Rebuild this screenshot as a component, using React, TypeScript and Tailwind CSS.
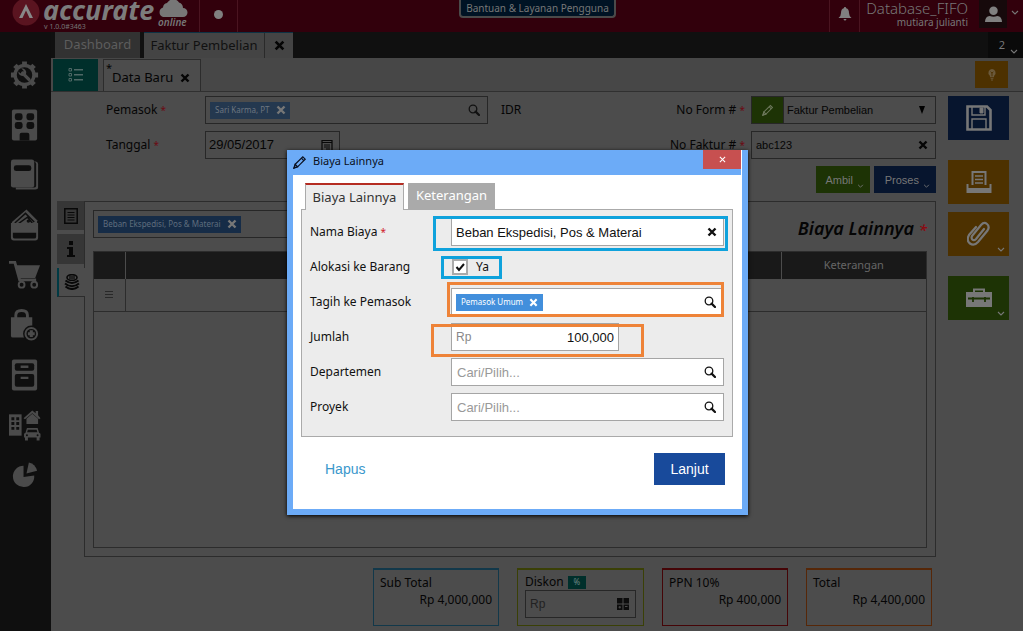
import React, { useState } from "react";

function Cross({ className = "" }: { className?: string }) {
  return (
    <svg viewBox="0 0 10 10" className={className} aria-hidden="true">
      <path d="M1.5 1.5 8.5 8.5M8.5 1.5 1.5 8.5" stroke="currentColor" strokeWidth="2.4" fill="none" />
    </svg>
  );
}

function Search({ className = "" }: { className?: string }) {
  return (
    <svg viewBox="0 0 12 12" className={className} aria-hidden="true">
      <circle cx="5" cy="5" r="3.8" stroke="currentColor" strokeWidth="1.3" fill="none" />
      <path d="M7.6 7.6 11 11" stroke="currentColor" strokeWidth="2.2" strokeLinecap="round" />
    </svg>
  );
}

function Chevron({ className = "" }: { className?: string }) {
  return (
    <svg viewBox="0 0 8 5" className={className} aria-hidden="true">
      <path d="M1 1 4 4 7 1" stroke="currentColor" strokeWidth="1.1" fill="none" />
    </svg>
  );
}

function Pencil({ className = "" }: { className?: string }) {
  return (
    <svg viewBox="0 0 14 14" className={className} fill="none" stroke="currentColor" aria-hidden="true">
      <path d="M2.2 9.2 9.8 1.8 12.2 4.2 4.6 11.8 1 13Z" strokeWidth="1.2" />
      <path d="M8.4 3.2 10.8 5.6M1 13 2.2 9.4 4.6 11.8Z" strokeWidth="1.2" />
    </svg>
  );
}

const menu: { name: string; icon: React.ReactNode }[] = [
  {
    name: "Pengaturan",
    icon: (
      <>
        <circle cx="16" cy="16" r="11.5" />
        <path
          d="M16 2v28M2 16h28M6.1 6.1l19.8 19.8M25.9 6.1 6.1 25.9"
          stroke="#4b4b4b"
          strokeWidth="5"
          fill="none"
        />
        <circle cx="16" cy="16" r="8" fill="#0f0f0f" />
        <path d="M14 14 20.5 20.5" stroke="#4b4b4b" strokeWidth="3.4" strokeLinecap="round" />
        <path d="M9.5 12.5a4.5 4.5 0 0 0 6.5 4l1.5-1.5a4.5 4.5 0 0 0-5-6l2.5 2.6-.6 2.2-2.2.6Z" />
      </>
    ),
  },
  {
    name: "Perusahaan",
    icon: (
      <>
        <rect x="3" y="0" width="26" height="32" rx="2" />
        <g fill="#0f0f0f">
          <rect x="6" y="4" width="8" height="7" rx="2.5" />
          <rect x="18" y="4" width="8" height="7" rx="2.5" />
          <rect x="6" y="13" width="8" height="7" rx="2.5" />
          <rect x="18" y="13" width="8" height="7" rx="2.5" />
          <path d="M11 32v-6q0-2 2-2h6q2 0 2 2v6Z" />
        </g>
      </>
    ),
  },
  {
    name: "Buku Besar",
    icon: (
      <>
        <path d="M7 2h20q3 0 3 3v24q0 2-3 2H7Z" />
        <path d="M6 2h19q3 0 3 3v22q0 2-3 2H5Z" fill="#0f0f0f" />
        <rect x="2" y="0" width="24" height="29" rx="2.5" />
        <rect x="5" y="6" width="18" height="6" rx="2.5" fill="#0f0f0f" />
      </>
    ),
  },
  {
    name: "Kas & Bank",
    icon: (
      <>
        <path d="M3 13 18 0l11 11v4H3Z" />
        <path d="M6 14 17 4l9 9M9 15l10-7 5 6" stroke="#0f0f0f" strokeWidth="1.5" fill="none" />
        <circle cx="20" cy="12" r="1.8" fill="#0f0f0f" />
        <path d="M2 14h28v15q0 3-3 3H5q-3 0-3-3Z" />
        <path d="M4 24h24v4q0 2-2 2H6q-2 0-2-2Z" fill="#0f0f0f" />
      </>
    ),
  },
  {
    name: "Penjualan",
    icon: (
      <>
        <path d="M0 3h6l5 18h17" stroke="#4b4b4b" strokeWidth="3" fill="none" />
        <path d="M7 6h25l-5 13H11Z" />
        <circle cx="13" cy="26" r="3" stroke="#4b4b4b" strokeWidth="2" fill="none" />
        <circle cx="26" cy="26" r="3" stroke="#4b4b4b" strokeWidth="2" fill="none" />
      </>
    ),
  },
  {
    name: "Pembelian",
    icon: (
      <>
        <path d="M2 8h22v21H4q-2 0-2-2Z" />
        <path d="M7 10V6q0-5 6-5t6 5v4" stroke="#4b4b4b" strokeWidth="3" fill="none" />
        <circle cx="23" cy="25" r="8.5" fill="#0f0f0f" />
        <circle cx="23" cy="25" r="6" stroke="#4b4b4b" strokeWidth="2" fill="none" />
        <path d="M23 21.5v7M19.5 25h7" stroke="#4b4b4b" strokeWidth="3.2" />
      </>
    ),
  },
  {
    name: "Persediaan",
    icon: (
      <>
        <rect x="3" y="0" width="26" height="32" rx="2" />
        <rect x="6" y="4" width="20" height="7.5" rx="2" fill="#0f0f0f" />
        <rect x="6" y="15" width="20" height="13" rx="2" fill="#0f0f0f" />
        <path d="M12 7.5h8M12 19h8" stroke="#4b4b4b" strokeWidth="2.5" />
      </>
    ),
  },
  {
    name: "Aset Tetap",
    icon: (
      <>
        <rect x="0" y="5" width="13" height="22" />
        <g fill="#0f0f0f">
          <path d="M2.5 8h3v3h-3zM7.500 8h3v3h-3zM2.500 13h3v3h-3zM7.500 13h3v3h-3zM2.500 18h3v3h-3zM7.500 18h3v3h-3z" />
        </g>
        <path d="m15 9 9-8 3.500 3V1.500H30V6l2.500 3-1.500 1-7-6-7.500 6Z" />
        <path d="M18 9.500 24 4.500l6 5V15H18Z" />
        <path d="M18.500 19h11l1.500 5 1.500 1v4h-1v3h-3v-3h-9v3h-3v-3h-1v-4l1.500-1Z" />
        <path d="M19.500 21h9l.8 2.600H18.700Z" fill="#0f0f0f" />
        <circle cx="18.500" cy="26.500" r="1" fill="#0f0f0f" />
        <circle cx="29.500" cy="26.500" r="1" fill="#0f0f0f" />
      </>
    ),
  },
  {
    name: "Laporan",
    icon: (
      <>
        <path d="M15 6.500v11.500l11-1.500A11 11 0 1 1 15 6.500Z" />
        <path d="M18 14.500 20.500 3q6.500 1.500 8.500 8.500Z" />
      </>
    ),
  },
];

const label = "text-[12px]";
const inputBox = "flex items-center border border-[#272727] bg-[#4c4c4c]";

function Required({ className = "text-[10px] text-[#6b0a12]" }: { className?: string }) {
  return <span className={className}>*</span>;
}

function DarkChip({ text, light }: { text: string; light?: boolean }) {
  return (
    <span
      className={
        "flex h-[17px] items-center gap-[6px] pl-[5px] pr-1 text-[8px] " +
        (light ? "bg-[#24384f] text-[#6d7680]" : "bg-[#162c47] text-[#5f6d7d]")
      }
    >
      {text}
      <button aria-label={"Hapus " + text}>
        <Cross className="size-[10px] text-[#777]" />
      </button>
    </span>
  );
}

function Total({ name, value, tone }: { name: string; value: string; tone: string }) {
  return (
    <div className={"h-[58px] w-[126px] border border-t-2 px-[6px] pt-1 text-[12px] " + tone}>
      <div className="leading-[18px]">{name}</div>
      <div className="text-right leading-4">{value}</div>
    </div>
  );
}

function Dialog() {
  const [checked, setChecked] = useState(true);
  const field = "flex h-7 items-center border border-[#a5a5a5] bg-white";
  const mark = "pointer-events-none absolute border-[3px]";
  return (
    <div
      role="dialog"
      aria-label="Biaya Lainnya"
      className="absolute left-[287px] top-[150px] w-[461px] border-x-6 border-b-6 border-[#6cabf7] bg-white shadow-[0_1px_4px_#000]"
    >
      <div className="flex h-[25px] items-start bg-[#6cabf7] text-[#0a1020]">
        <Pencil className="mt-[5px] size-[14px]" />
        <h2 className="ml-[6px] mt-[3px] flex-1 text-[11px] leading-4">Biaya Lainnya</h2>
        <button aria-label="Tutup" className="flex h-[19px] w-[38px] items-center justify-center bg-[#c75050]">
          <svg viewBox="0 0 8 8" className="size-[7px]" aria-hidden="true">
            <path d="M1 1 7 7M7 1 1 7" stroke="#fff" strokeWidth="1.2" />
          </svg>
        </button>
        <div className="h-full w-px bg-white" />
      </div>
      <div className="pb-6 pl-2 pr-[9px] pt-2">
        <div role="tablist" className="relative z-10 -mb-px flex gap-1 pl-1 text-[13px]">
          <button
            role="tab"
            aria-selected="true"
            className="h-[27px] w-[99px] border-x border-t-2 border-x-[#aaa] border-t-[#b52c22] bg-[#ececec] text-[#333]"
          >
            Biaya Lainnya
          </button>
          <button role="tab" aria-selected="false" className="h-[26px] w-[87px] bg-[#aaa] text-white">
            Keterangan
          </button>
        </div>
        <div className="grid grid-cols-[141px_1fr] items-center gap-y-[7px] border border-[#aaa] bg-[#ececec] pb-[15px] pl-2 pr-2 pt-2 text-[12px] text-[#111]">
          <label htmlFor="nama">
            Nama Biaya <Required className="text-[10px] text-[#d0202a]" />
          </label>
          <div className={"relative " + field}>
            <input
              id="nama"
              defaultValue="Beban Ekspedisi, Pos & Materai"
              className="h-full min-w-0 flex-1 pl-1 font-[Liberation_Sans] text-[13px] outline-none"
            />
            <button aria-label="Kosongkan" className="mr-[6px]">
              <Cross className="size-[10px]" />
            </button>
            <div className={mark + " -left-[19px] -right-[5px] -top-[3px] h-[35px] border-[#0fa2dc]"} />
          </div>

          <label htmlFor="alokasi">Alokasi ke Barang</label>
          <div className="relative flex h-7 items-center gap-2">
            <span className="relative ml-px flex size-4">
              <input
                id="alokasi"
                type="checkbox"
                checked={checked}
                onChange={(e) => setChecked(e.target.checked)}
                className="size-4 appearance-none border-2 border-[#aaa] bg-white"
              />
              {checked && (
                <svg viewBox="0 0 16 16" className="pointer-events-none absolute inset-0 size-4" aria-hidden="true">
                  <path d="M4.500 8 7 11 12 5" stroke="#111" strokeWidth="2" fill="none" />
                </svg>
              )}
            </span>
            <span>Ya</span>
            <div className={mark + " -left-[10px] top-[3px] h-[23px] w-[61px] border-[#0fa2dc]"} />
          </div>

          <label htmlFor="tagih">Tagih ke Pemasok</label>
          <div className={"relative " + field}>
            <span className="ml-1 flex h-[17px] items-center gap-[6px] bg-[#428fdc] pl-[5px] pr-[5px] text-[8px] text-white">
              Pemasok Umum
              <button aria-label="Hapus Pemasok Umum">
                <Cross className="size-[9px]" />
              </button>
            </span>
            <input id="tagih" className="h-full min-w-0 flex-1 outline-none" />
            <button aria-label="Cari pemasok" className="mr-[7px]">
              <Search className="size-3" />
            </button>
            <div className={mark + " -left-[5px] -right-px -top-[7px] h-[35px] border-[#ee8338]"} />
          </div>

          <label htmlFor="jumlah">Jumlah</label>
          <div className={"relative w-[168px] font-[Liberation_Sans] " + field}>
            <span className="pl-1 text-[12px] text-[#888]">Rp</span>
            <input
              id="jumlah"
              defaultValue="100,000"
              className="h-full min-w-0 flex-1 pr-1 text-right text-[13px] outline-none"
            />
            <div className={mark + " -left-[21px] -right-[26px] top-0 h-[33px] border-[#ee8338]"} />
          </div>

          <label htmlFor="dept">Departemen</label>
          <div className={field}>
            <input
              id="dept"
              placeholder="Cari/Pilih..."
              className="h-full min-w-0 flex-1 pl-[5px] font-[Liberation_Sans] text-[13px] outline-none placeholder:text-[#999]"
            />
            <button aria-label="Cari departemen" className="mr-[7px]">
              <Search className="size-3" />
            </button>
          </div>

          <label htmlFor="proyek">Proyek</label>
          <div className={field}>
            <input
              id="proyek"
              placeholder="Cari/Pilih..."
              className="h-full min-w-0 flex-1 pl-[5px] font-[Liberation_Sans] text-[13px] outline-none placeholder:text-[#999]"
            />
            <button aria-label="Cari proyek" className="mr-[7px]">
              <Search className="size-3" />
            </button>
          </div>
        </div>
        <div className="mt-4 flex items-center justify-between pl-6 pr-2 font-[Liberation_Sans] text-[14px]">
          <button className="text-[#3a98cc]">Hapus</button>
          <button className="h-8 w-[71px] bg-[#184a9b] text-white">Lanjut</button>
        </div>
      </div>
    </div>
  );
}

export default function App() {
  return (
    <div className="relative flex min-h-screen flex-col bg-white pr-0.5 font-['Noto_Sans',sans-serif] text-[#050505]">
      <header className="flex h-8 items-stretch bg-[#32000c] text-[#777]">
        <div className="relative w-[200px] border-r border-[#4a1420]">
          <svg viewBox="0 2 28 26" className="absolute left-3 top-0 h-[26px] w-7" aria-hidden="true">
            <circle cx="14" cy="14" r="13.500" fill="#5a1420" />
            <path d="M14 6 21 20h-3.500L14 12.500 10.500 20H7Z" fill="#888" />
          </svg>
          <span className="absolute left-[43px] top-0 text-[27px] font-bold italic leading-5 text-[#7c7c7c]">
            accurate
          </span>
          <svg viewBox="0 1 30 17" className="absolute left-[158px] top-0 h-[17px] w-[30px]" aria-hidden="true">
            <path d="M5 18a5 5 0 0 1 0-9.500A5 5 0 0 1 9 4 7 7 0 0 1 21 3.500 6 6 0 0 1 25 9a4.500 4.500 0 0 1 0 9Z" fill="#777" />
          </svg>
          <span className="absolute left-[158px] top-[16px] text-[10px] font-semibold italic leading-[13px]">online</span>
          <span className="absolute left-[44px] top-[22px] text-[7px] leading-[9px]">v 1.0.0#3463</span>
        </div>
        <div className="flex w-[38px] items-center justify-center border-r border-[#4a1420]">
          <span className="-mt-1 size-[9px] rounded-full bg-[#808080]" />
        </div>
        <div className="flex flex-1 justify-center pl-2">
          <button className="h-[18px] w-[157px] rounded-b border-2 border-t-0 border-[#4a4a4a] bg-[#001324] text-[10px] leading-[14px] text-[#777]">
            Bantuan &amp; Layanan Pengguna
          </button>
        </div>
        <div className="flex w-[31px] items-center justify-center border-x border-[#4a1420]">
          <svg viewBox="0 0 14 14" className="-mt-1 size-[14px]" fill="#808080" aria-label="Notifikasi">
            <path d="M7 0q1.200 0 1.200 1.200Q11 2 11 6q0 3 2.500 5H.5Q3 9 3 6q0-4 2.800-4.800Q5.800 0 7 0Z" />
            <path d="M5.500 12h3q-.3 1.500-1.500 1.500T5.500 12Z" />
          </svg>
        </div>
        <div className="w-[108px] text-right">
          <div className="text-[15px] font-light leading-[17px]">Database_FIFO</div>
          <div className="text-[10px] leading-[11px]">mutiara julianti</div>
        </div>
        <div className="ml-[11px] flex h-7 w-7 items-center justify-center bg-[#16090b]">
          <svg viewBox="0 0 18 18" className="size-[17px]" fill="#808080" aria-label="Pengguna">
            <circle cx="9" cy="5" r="4.500" />
            <path d="M0 17q0-6 5-6.500 4 1.500 8 0 5 .5 5 6.500Z" />
          </svg>
        </div>
        <div className="flex w-4 justify-center pt-[10px]">
          <Chevron className="h-[5px] w-2" />
        </div>
      </header>

      <div className="flex flex-1">
        <nav className="w-[51px] bg-[#0f0f0f] pt-[18px]" aria-label="Menu utama">
          {menu.map((m) => (
            <a key={m.name} href="#" aria-label={m.name} className="flex h-[50px] items-center justify-center pr-0.5">
              <svg viewBox="0 0 33 32" className="size-8" fill="#4b4b4b" aria-hidden="true">
                {m.icon}
              </svg>
            </a>
          ))}
        </nav>

        <div className="flex min-w-0 flex-1 flex-col bg-[#4c4c4c]">
          <div className="flex h-[26px] items-stretch bg-[#101010] pl-1 text-[13px]">
            <button className="w-[85px] bg-[#323232] text-[#5d5d5d]">Dashboard</button>
            <div className="ml-1 flex w-[149px] border-t border-[#0d3244] bg-[#444]">
              <button className="w-[121px] border-r border-[#2a2a2a] text-[#111]">Faktur Pembelian</button>
              <button aria-label="Tutup tab" className="flex flex-1 items-center justify-center">
                <Cross className="size-[11px]" />
              </button>
            </div>
            <button className="ml-auto flex w-[35px] items-center justify-end gap-[5px] bg-[#0a0a0a] pr-[5px] text-[11px] text-[#777]">
              2
              <Chevron className="mt-3 h-[5px] w-2" />
            </button>
          </div>

          <div className="flex h-[34px] items-end border-b border-[#303030] bg-[#474747] pl-[2px]">
            <button aria-label="Daftar" className="flex h-8 w-[45px] items-center justify-center bg-[#002f2b]">
              <svg viewBox="0 0 16 14" className="h-[14px] w-4" stroke="#4f6866" fill="none" aria-hidden="true">
                <path d="M1 .5h2.500V3H1zM1 5.500h2.500V8H1zM1 10.500h2.500V13H1z" />
                <path d="M6 1.800h9M6 6.800h9M6 11.800h9" strokeWidth="1.500" />
              </svg>
            </button>
            <div className="relative ml-[5px] flex h-8 w-[98px] items-center border border-b-0 border-[#2c2c2c] bg-[#4c4c4c] pl-2 pt-1">
              <span className="absolute left-[2px] top-0 text-[11px] leading-4">*</span>
              <span className="text-[13px]">Data Baru</span>
              <button aria-label="Tutup Data Baru" className="ml-[7px]">
                <Cross className="size-[10px]" />
              </button>
            </div>
            <button
              aria-label="Petunjuk"
              className="mb-[3px] ml-auto mr-[15px] flex h-[27px] w-[33px] items-center justify-center bg-[#4d3100]"
            >
              <svg viewBox="0 0 10 14" className="h-[13px] w-[10px]" aria-hidden="true">
                <path d="M5 1a4 4 0 0 1 2.500 7L7 10H3L2.500 8A4 4 0 0 1 5 1Z" fill="#6b5a3c" />
                <path d="M5 9V5M3.500 4 5 5.500 6.500 4" stroke="#4d3100" fill="none" />
                <path d="M3.500 11.500h3M4 13h2" stroke="#6b5a3c" />
              </svg>
            </button>
          </div>

          <div className="flex flex-1 pl-[6px] pr-[14px] pt-1">
            <main className="flex min-w-0 flex-1 flex-col">
              <div className="flex justify-between pl-[49px]">
                <div className="grid grid-cols-[99px_auto_auto] content-start items-center gap-y-[7px]">
                  <label htmlFor="pemasok" className={label}>
                    Pemasok <Required />
                  </label>
                  <div className={inputBox + " h-7 w-[283px] pl-1"}>
                    <DarkChip text="Sari Karma, PT" light />
                    <input id="pemasok" className="min-w-0 flex-1 outline-none" />
                    <Search className="mr-[7px] size-3 text-[#111]" />
                  </div>
                  <span className="pl-[13px] text-[12px]">IDR</span>
                  <label htmlFor="tanggal" className={label}>
                    Tanggal <Required />
                  </label>
                  <div className={inputBox + " h-7 w-[135px] pl-[3px]"}>
                    <input
                      id="tanggal"
                      defaultValue="29/05/2017"
                      className="min-w-0 flex-1 font-[Liberation_Sans] text-[13px] outline-none"
                    />
                    <svg viewBox="0 0 12 12" className="mr-[6px] size-3" aria-hidden="true">
                      <path d="M1 1.500h10v10H1zM1 3.500h10M3 6h6M3 8h6M5 10h4" stroke="#080808" strokeWidth="1.200" fill="none" />
                    </svg>
                  </div>
                </div>
                <div className="grid grid-cols-[auto_185px] items-center gap-x-[6px] gap-y-[7px]">
                  <label htmlFor="form" className={label + " text-right"}>
                    No Form # <Required />
                  </label>
                  <div className={inputBox + " relative h-7"}>
                    <button aria-label="Ubah nomor" className="flex h-full w-[31px] items-center justify-center bg-[#1d3305]">
                      <Pencil className="size-3 text-[#6d785c]" />
                    </button>
                    <select
                      id="form"
                      className="h-full min-w-0 flex-1 appearance-none border-l border-[#272727] pl-[3px] font-[Liberation_Sans] text-[11px] outline-none"
                    >
                      <option>Faktur Pembelian</option>
                    </select>
                    <svg viewBox="0 0 8 8" className="pointer-events-none absolute right-[9px] size-2" aria-hidden="true">
                      <path d="M1 0h6L4 8Z" />
                    </svg>
                  </div>
                  <label htmlFor="faktur" className={label + " text-right"}>
                    No Faktur # <Required />
                  </label>
                  <div className={inputBox + " h-7 pl-1"}>
                    <input
                      id="faktur"
                      defaultValue="abc123"
                      className="min-w-0 flex-1 font-[Liberation_Sans] text-[11px] outline-none"
                    />
                    <button aria-label="Kosongkan nomor" className="mr-[7px]">
                      <Cross className="size-[10px]" />
                    </button>
                  </div>
                  <div className="col-span-2 flex justify-end gap-1 font-[Liberation_Sans] text-[11px] text-[#777]">
                    <button className="flex h-[27px] w-[54px] items-center justify-end gap-1 bg-[#1d3305] pr-[6px] pt-0.5">
                      Ambil <Chevron className="mt-[10px] h-[4px] w-[7px]" />
                    </button>
                    <button className="flex h-[27px] w-[62px] items-center justify-end gap-1 bg-[#07152e] pr-[6px] pt-0.5">
                      Proses <Chevron className="mt-[10px] h-[4px] w-[7px]" />
                    </button>
                  </div>
                </div>
              </div>

              <div className="mt-2 flex flex-1">
                <div role="tablist" aria-orientation="vertical" className="z-10 -mr-px flex w-7 flex-col gap-1">
                  <button role="tab" aria-label="Rincian" className="flex h-[29px] w-[27px] items-center justify-center bg-[#363636]">
                    <svg viewBox="0 0 14 16" className="h-4 w-[14px]" stroke="#080808" fill="none" aria-hidden="true">
                      <path d="M.8.8h12.400v14.400H.8Z" strokeWidth="1.500" />
                      <path d="M3.500 4.500h7M3.500 7h7M3.500 9.500h7M3.500 12h7" />
                    </svg>
                  </button>
                  <button role="tab" aria-label="Info" className="flex h-[30px] w-[27px] items-center justify-center bg-[#363636]">
                    <svg viewBox="0 0 8 16" className="h-4 w-2" fill="#080808" aria-hidden="true">
                      <path d="M2 0h4v4H2zM0 6h6v8h2v2H0v-2h2V8H0z" />
                    </svg>
                  </button>
                  <button
                    role="tab"
                    aria-label="Biaya"
                    aria-selected="true"
                    className="flex h-[29px] w-7 items-center justify-center border-b border-l-2 border-b-[#2c2c2c] border-l-[#003a44] bg-[#4c4c4c]"
                  >
                    <svg viewBox="0 0 16 16" className="size-4" fill="none" stroke="#080808" aria-hidden="true">
                      <ellipse cx="8" cy="3.500" rx="5" ry="2.800" strokeWidth="1.600" />
                      <path d="M6 2v3M8 2v3M10 2v3" strokeWidth="1.200" />
                      <path d="M1.500 6.500q6.500 5 13 0M1 9.500q7 5.500 14 0M1.500 12.500q6.500 5 13 0" strokeWidth="2" />
                    </svg>
                  </button>
                </div>
                <section className="flex min-w-0 flex-1 flex-col border border-[#2c2c2c] p-2">
                  <div className="flex h-8 items-start justify-between">
                    <div className={inputBox + " h-7 w-[300px] pl-1"}>
                      <DarkChip text="Beban Ekspedisi, Pos & Materai" />
                    </div>
                    <h1 className="pt-[6px] text-[18px] font-semibold italic leading-6">
                      Biaya Lainnya <Required className="text-[15px] text-[#8b0a12]" />
                    </h1>
                  </div>
                  <div className="mt-[9px] flex-1 border border-[#2c2c2c]">
                    <table className="w-full table-fixed border-collapse text-[11px]">
                      <thead>
                        <tr className="h-[27px] bg-[#191919] text-[#666]">
                          <th className="w-[31px] border-r border-[#4c4c4c]" />
                          <th className="border-r border-[#4c4c4c]" />
                          <th className="w-[145px] font-normal">Keterangan</th>
                        </tr>
                      </thead>
                      <tbody>
                        <tr className="h-8 border-b border-[#2c2c2c]">
                          <td className="border-r border-[#2c2c2c] text-center text-[#222]">
                            <svg viewBox="0 0 8 7" className="mx-auto h-[7px] w-2" stroke="#282828" aria-hidden="true">
                              <path d="M0 .5h8M0 3.500h8M0 6.500h8" />
                            </svg>
                          </td>
                          <td />
                          <td />
                        </tr>
                      </tbody>
                    </table>
                  </div>
                </section>
              </div>

              <div className="flex justify-end gap-[18px] pb-[5px] pr-1 pt-[11px]">
                <Total name="Sub Total" value="Rp 4,000,000" tone="border-[#12384a]" />
                <div className="h-[58px] w-[127px] border border-t-2 border-[#3a4006] px-[7px] pt-1 text-[12px]">
                  <div className="flex h-4 items-center gap-1">
                    <label htmlFor="diskon">Diskon</label>
                    <button className="h-[13px] w-[18px] bg-[#002f2b] text-[8px] leading-3 text-[#6b8583]">%</button>
                  </div>
                  <div className={inputBox + " h-7 px-1 font-[Liberation_Sans]"}>
                    <input
                      id="diskon"
                      placeholder="Rp"
                      className="min-w-0 flex-1 text-[12px] outline-none placeholder:text-[#222]"
                    />
                    <svg viewBox="0 0 12 12" className="mr-[2px] size-3" aria-hidden="true">
                      <path d="M0 0h5.500v5.500H0zM6.500 0H12v5.500H6.500zM0 6.500h5.500V12H0zM6.500 6.500H12V12H6.500z" fill="#0c0c0c" />
                      <path d="M1.500 9.200H4M2.800 8v2.500M8 8.500h2.500" stroke="#4c4c4c" />
                    </svg>
                  </div>
                </div>
                <Total name="PPN 10%" value="Rp 400,000" tone="border-[#450507]" />
                <Total name="Total" value="Rp 4,400,000" tone="border-[#562708]" />
              </div>
            </main>

            <aside className="ml-3 flex w-[61px] flex-col text-[#777]">
              <button aria-label="Simpan" className="flex h-11 items-center justify-center bg-[#07152e]">
                <svg viewBox="0 0 26 26" className="size-[26px]" fill="none" stroke="currentColor" aria-hidden="true">
                  <path d="M1.500 1.500H21l3.500 3.500v19.500h-23Z" strokeWidth="2.600" />
                  <path d="M6 2v8h13V2M6 24V14h14v10" strokeWidth="1.400" />
                  <path d="M14 3h3v5h-3z" fill="currentColor" />
                </svg>
              </button>
              <button aria-label="Cetak" className="mt-5 flex h-11 items-center justify-center bg-[#4d3100]">
                <svg viewBox="0 0 26 24" className="h-6 w-[26px]" fill="none" stroke="currentColor" aria-hidden="true">
                  <path d="M6.500 15V2h13v13" strokeWidth="2" />
                  <path d="M9 6h8M9 9.500h8M9 13h8" strokeWidth="1.600" />
                  <path d="M1.500 14v8h23v-8" strokeWidth="2" />
                  <path d="M2 20h22" strokeWidth="4" />
                </svg>
              </button>
              <button aria-label="Lampiran" className="relative mt-2 flex h-11 items-center justify-center bg-[#4d3100]">
                <svg viewBox="0 0 24 26" className="h-[26px] w-6" fill="none" stroke="currentColor" strokeWidth="2.200" strokeLinecap="round" aria-hidden="true">
                  <path d="m17 8-8 10q-2 2-3.500.7T5 15L14 4q3-3.500 6-1t.5 6.500L11 21q-4 4.500-8 1.500T2 14l7-8" />
                </svg>
                <Chevron className="absolute bottom-1 right-1 h-[5px] w-2" />
              </button>
              <button aria-label="Perkakas" className="relative mt-5 flex h-11 items-center justify-center bg-[#1d3305]">
                <svg viewBox="0 0 26 20" className="h-5 w-[26px]" aria-hidden="true">
                  <path d="M8 5V1.500h10V5" stroke="currentColor" strokeWidth="2" fill="none" />
                  <path d="M0 4h26v15H0Z" fill="currentColor" />
                  <path d="M2 10.500h22M7 9v5M19 9v5" stroke="#1d3305" strokeWidth="1.800" />
                </svg>
                <Chevron className="absolute bottom-1 right-1 h-[5px] w-2" />
              </button>
            </aside>
          </div>
        </div>
      </div>
      <Dialog />
    </div>
  );
}
